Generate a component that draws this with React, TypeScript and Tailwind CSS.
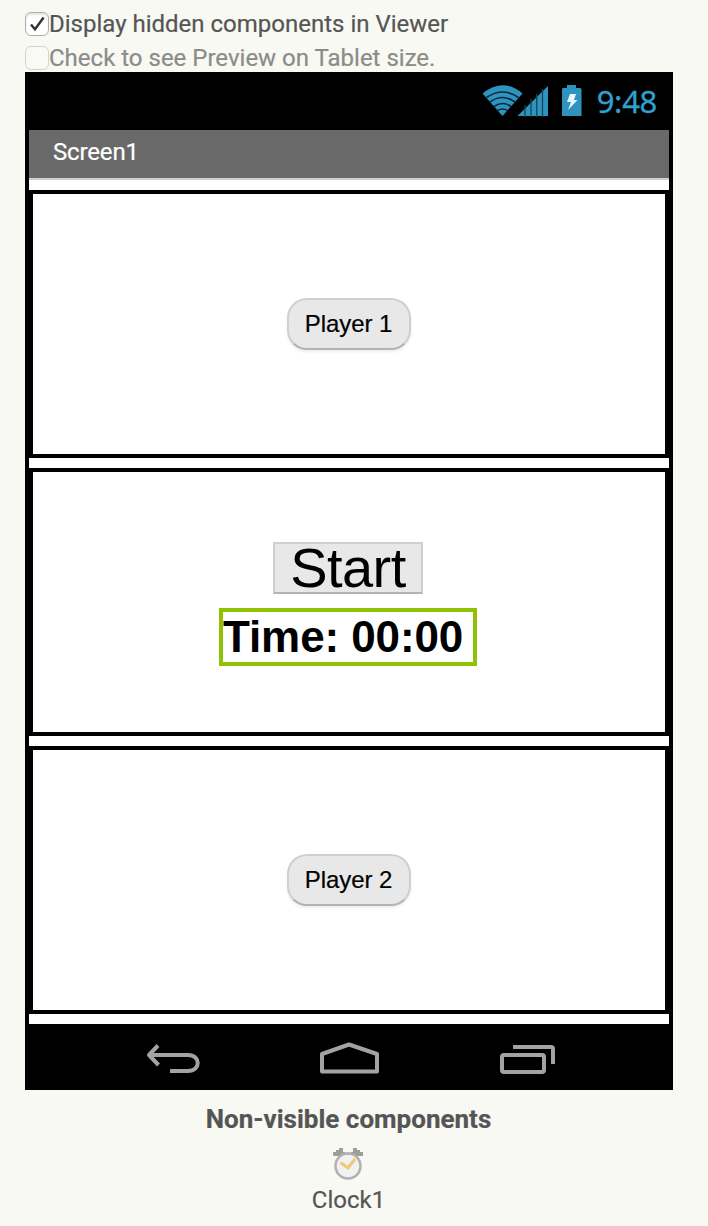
import type { ReactNode } from 'react';

function Checkbox({ checked = false, disabled = false }: { checked?: boolean; disabled?: boolean }) {
  return (
    <span
      className={
        disabled
          ? 'flex size-6 items-center justify-center rounded-[6px] border border-[#d3d4cf] bg-[#f9f9f5]'
          : 'flex size-6 items-center justify-center rounded-[6px] border border-[#adadab] bg-white shadow-[inset_0_2px_2px_#e6e6e4]'
      }
    >
      {checked && (
        <svg viewBox="0 0 24 24" className="size-6 shrink-0" fill="none" stroke="#333" strokeWidth="2.4">
          <path d="M6 12.500l4 4.800L18.600 5.500" />
        </svg>
      )}
    </span>
  );
}

function Panel({ children }: { children: ReactNode }) {
  return (
    <section className="flex h-[268px] flex-col items-center justify-center border-4 border-black bg-white">
      {children}
    </section>
  );
}

const buttonEdge =
  'flex items-center justify-center border-2 border-[#cfcfcf] border-b-[#b3b3b3] bg-[#e8e8e8] text-black';

function PlayerButton({ label }: { label: string }) {
  return (
    <button
      className={`${buttonEdge} h-[52px] w-[124px] rounded-[20px] font-['Liberation_Sans',sans-serif] text-2xl shadow-[0_2px_3px_#00000012]`}
    >
      <span className="pr-px tracking-[-0.05px] [-webkit-text-stroke:0.2px]">{label}</span>
    </button>
  );
}

function StatusBar() {
  return (
    <div className="flex h-[58px] items-center justify-end pr-4">
      <svg width="106" height="40" viewBox="0 0 106 40" className="mr-2">
        <g fill="#2f93bf">
          <path d="M-0.500 12.500Q20 -4 39.500 12.500L19.500 35Z" />
          <path d="M34.500 35L65 5V35Z" />
          <path d="M80 7h4V4h9v3h4q1.500 0 1.500 1.500V35H79V8.500Q79 7 80 7Z" />
        </g>
        <g fill="none" strokeWidth="1.600">
          <path d="M3.500 16.500Q19.500 5.500 35.500 16.500M7 21Q19.500 12 32 21M11 25.500Q19.500 19.500 28 25.500M14.500 29.500Q19.500 26.500 24.500 29.500" stroke="#0a2a38" />
          <path d="M42 24v12M48 18v18M53.700 13v23M59.500 8v28" stroke="#12465b" strokeWidth="1.300" />
        </g>
        <path d="M87 13h6l-2 6h3.500L85 29l3-8h-4Z" fill="#e7f7fd" />
      </svg>
      <span className="font-['Noto_Sans',sans-serif] text-[31px] leading-10 tracking-[-0.300px] text-[#30a0d0] [-webkit-text-stroke:0.3px]">
        9:48
      </span>
    </div>
  );
}

function NavigationBar() {
  return (
    <div className="flex h-[66px] bg-black">
      <svg width="648" height="66" viewBox="0 0 648 66" fill="none" stroke="#a3a3a3" strokeWidth="4" strokeLinejoin="round">
        <path d="M133 21.500L124 31l9.500 10M125 31h38c13 0 13 16 0 16h-18" />
        <path d="M297 47.500V30l27-9.500 28 9.500v17.500Z" />
        <rect x="477" y="31" width="42" height="17" rx="2" />
        <path d="M488 23h38q2 0 2 2v15" />
      </svg>
    </div>
  );
}

function ClockIcon() {
  return (
    <svg width="32" height="34" viewBox="0 0 32 34" className="mr-0.5">
      <path d="M1 9V6h3V4h3V2h4v4h2v2h-3v2H2ZM21 2h4v2h3v2h3v4h-9V8h-3V6h2Z" fill="#9d9d9b" />
      <path d="M7 27l3 5h4v-2M25 27l-3 5h-4v-2M12 8l2-1.500h4L20 8" fill="#a5a5a3" />
      <circle cx="16" cy="20" r="12.500" fill="#f1f1f1" stroke="#b0b0ae" strokeWidth="2.500" />
      <path d="M8.500 16.500l7.500 5.500 7-9" fill="none" stroke="#f3c875" strokeWidth="3" />
    </svg>
  );
}

export default function App() {
  return (
    <main className="flex h-[1226px] w-[708px] flex-col bg-[#f8f9f3] pl-[25px] font-[Roboto,sans-serif] text-[24px] text-[#555] [-webkit-text-stroke:0.2px]">
      <div className="flex h-[72px] flex-col pt-3">
        <div className="flex h-[34px] items-start">
          <Checkbox checked />
          <span className="leading-6">Display hidden components in Viewer</span>
        </div>
        <div className="flex h-[26px] items-start text-[#8b8c89]">
          <Checkbox disabled />
          <span className="leading-6">Check to see Preview on Tablet size.</span>
        </div>
      </div>

      <div className="w-[648px] bg-black">
        <StatusBar />
        <div className="mx-1 bg-white">
          <div className="h-[50px] border-b-2 border-[#cfcfcf] bg-[#696969] pl-6 leading-[44px] tracking-[-0.150px] text-white">
            Screen1
          </div>
          <div className="flex flex-col gap-[10px] py-[10px]">
            <Panel>
              <PlayerButton label="Player 1" />
            </Panel>
            <Panel>
              <div className="flex flex-col items-center gap-[14px] pt-1 pr-0.5 font-['Liberation_Sans',sans-serif] [-webkit-text-stroke:0px]">
                <button className={`${buttonEdge} h-[52px] w-[150px] pb-px text-[56px] leading-[46px] tracking-[-0.600px]`}>
                  Start
                </button>
                <div className="h-[58px] w-[258px] border-4 border-[#8fc202] text-[44px] leading-[50px] font-bold tracking-[-0.100px] whitespace-nowrap text-black">
                  Time: 00:00
                </div>
              </div>
            </Panel>
            <Panel>
              <PlayerButton label="Player 2" />
            </Panel>
          </div>
        </div>
        <NavigationBar />
      </div>

      <div className="flex w-[648px] flex-col items-center">
        <h2 className="mt-[13px] pr-px text-[26px] leading-8 font-bold">Non-visible components</h2>
        <div className="mt-[11px] flex flex-col items-center">
          <ClockIcon />
          <span className="mt-1 pr-px leading-8">Clock1</span>
        </div>
      </div>
    </main>
  );
}
